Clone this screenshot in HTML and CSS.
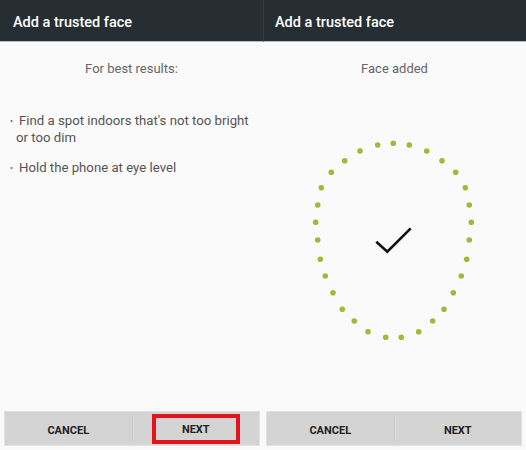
FILE: index.html
```html
<!DOCTYPE html>
<html>
<head>
<meta charset="utf-8">
<link rel="stylesheet" href="styles.css">
</head>
<body>
<div class="screen">
  <section class="panel panel-left">
    <header class="header"><h1 class="title">Add a trusted face</h1></header>
    <div class="content">
      <p class="lead">For best results:</p>
      <ul class="tips">
        <li class="tip">Find a spot indoors that's not too bright or too dim</li>
        <li class="tip">Hold the phone at eye level</li>
      </ul>
    </div>
    <div class="actions">
      <div class="btn">CANCEL</div>
      <span class="sep"></span>
      <div class="btn"><span class="hl">NEXT</span></div>
    </div>
  </section>
  <section class="panel panel-right">
    <header class="header"><h1 class="title">Add a trusted face</h1></header>
    <div class="content">
      <p class="lead">Face added</p>
      <svg class="face" width="262" height="220" viewBox="264 130 262 220" xmlns="http://www.w3.org/2000/svg">
        <g fill="#9fba3a">
          <circle cx="394.3" cy="143.3" r="2.8"/>
          <circle cx="410.3" cy="145" r="2.8"/>
          <circle cx="427.7" cy="151" r="2.8"/>
          <circle cx="443" cy="160.7" r="2.8"/>
          <circle cx="456.7" cy="172.3" r="2.8"/>
          <circle cx="466.3" cy="187.7" r="2.8"/>
          <circle cx="470.3" cy="205" r="2.8"/>
          <circle cx="472.3" cy="222.3" r="2.8"/>
          <circle cx="470.3" cy="240" r="2.8"/>
          <circle cx="467.7" cy="259.3" r="2.8"/>
          <circle cx="462.3" cy="276" r="2.8"/>
          <circle cx="454.3" cy="292.7" r="2.8"/>
          <circle cx="445" cy="309.3" r="2.8"/>
          <circle cx="433.7" cy="321" r="2.8"/>
          <circle cx="419.7" cy="331.7" r="2.8"/>
          <circle cx="402.3" cy="337.3" r="2.8"/>
          <circle cx="386.7" cy="337.3" r="2.8"/>
          <circle cx="369" cy="331.7" r="2.8"/>
          <circle cx="355.3" cy="321" r="2.8"/>
          <circle cx="343.3" cy="309.3" r="2.8"/>
          <circle cx="334" cy="292.7" r="2.8"/>
          <circle cx="326.3" cy="276" r="2.8"/>
          <circle cx="321.3" cy="259.3" r="2.8"/>
          <circle cx="318.7" cy="240" r="2.8"/>
          <circle cx="316.7" cy="222.3" r="2.8"/>
          <circle cx="318.7" cy="205" r="2.8"/>
          <circle cx="322.3" cy="187.7" r="2.8"/>
          <circle cx="332.3" cy="172.3" r="2.8"/>
          <circle cx="345.7" cy="160.7" r="2.8"/>
          <circle cx="361" cy="151" r="2.8"/>
          <circle cx="378.7" cy="145" r="2.8"/>
        </g>
        <polyline points="377.3,241.7 388.3,251.7 411.7,228.3" fill="none" stroke="#111" stroke-width="2.6"/>
      </svg>
    </div>
    <div class="actions">
      <div class="btn">CANCEL</div>
      <span class="sep"></span>
      <div class="btn">NEXT</div>
    </div>
  </section>
</div>
</body>
</html>
```
FILE: styles.css
```css
html, body {
  margin: 0;
  padding: 0;
  background: #fafafa;
}
.screen {
  display: flex;
  width: 526px;
  height: 450px;
  font-family: Roboto, "Liberation Sans", sans-serif;
}
.panel {
  width: 263px;
  display: flex;
  flex-direction: column;
}
.header {
  background: #262e33;
  border-bottom: 1px solid #b9bdbf;
  display: flex;
  align-items: center;
  box-sizing: border-box;
  height: 42px;
  padding-top: 3px;
}
.panel-right .header {
  border-left: 1px solid #343e44;
}
.title {
  margin: 0;
  padding-left: 13px;
  font-size: 14.5px;
  font-weight: 500;
  color: #ffffff;
}
.panel-right .title {
  padding-left: 11px;
}
.content {
  flex: 1;
  display: flex;
  flex-direction: column;
}
.lead {
  margin: 19px 0 0;
  text-align: center;
  font-size: 13px;
  color: #666;
  line-height: 16px;
}
.tips {
  list-style: none;
  margin: 36px 0 0;
  padding: 0 10px 0 16px;
}
.tip {
  font-size: 13.2px;
  color: #555;
  line-height: 15.5px;
  margin-bottom: 14.5px;
}
.tip::before {
  content: "\2022";
  display: inline-block;
  width: 9px;
  margin-left: -6px;
  font-size: 9px;
  vertical-align: 1px;
  color: #666;
}
.face {
  display: block;
  margin-top: 53px;
}
.actions {
  display: flex;
  align-items: stretch;
  height: 35px;
  margin: 0 3px 4px 4px;
  background: #d4d4d4;
  border: 1px solid #e2e2e2;
  box-sizing: border-box;
}
.panel-right .actions {
  margin: 0 4px 4px 3px;
}
.btn {
  flex: 1 1 0;
  min-width: 0;
  font-size: 11px;
  font-weight: 700;
  color: #222;
  display: flex;
  align-items: center;
  justify-content: center;
  padding-top: 3px;
}
.sep {
  width: 1px;
  margin: 4px 0;
  background: #c6c6c6;
  box-shadow: 1px 0 0 #dedede;
}
.hl {
  flex: 1;
  align-self: stretch;
  display: flex;
  align-items: center;
  justify-content: center;
  margin: -1px 19px 1px 19px;
  border: 4px solid #e3141c;
}
```
